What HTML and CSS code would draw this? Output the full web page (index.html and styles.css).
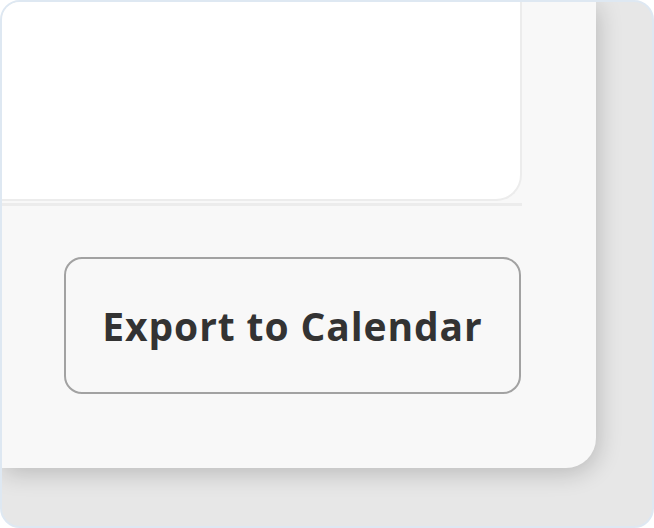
FILE: index.html
```html
<!DOCTYPE html>
<html>
<head>
<meta charset="utf-8">
<link rel="stylesheet" href="styles.css">
</head>
<body>
<div class="frame">
  <div class="card">
    <div class="panel"></div>
    <div class="divider"></div>
    <div class="actions">
      <button class="export-btn">Export to Calendar</button>
    </div>
  </div>
</div>
</body>
</html>
```
FILE: styles.css
```css
html, body {
  margin: 0;
  padding: 0;
  background: #ffffff;
}
.frame {
  box-sizing: border-box;
  width: 654px;
  height: 528px;
  border: 2px solid #dee8f2;
  border-radius: 20px;
  background: #e7e7e7;
  overflow: hidden;
}
.card {
  box-sizing: border-box;
  width: 594px;
  height: 466px;
  background: #f8f8f8;
  border-bottom-right-radius: 30px;
  box-shadow: 2px 5px 24px rgba(0, 0, 0, 0.2);
  display: flex;
  flex-direction: column;
}
.panel {
  box-sizing: border-box;
  width: 520px;
  height: 199px;
  background: #ffffff;
  border-right: 2px solid #ececec;
  border-bottom: 2px solid #ececec;
  border-bottom-right-radius: 26px;
}
.divider {
  width: 520px;
  height: 3px;
  margin-top: 2px;
  background: #ececec;
}
.actions {
  padding: 51px 0 0 62px;
}
.export-btn {
  box-sizing: border-box;
  width: 457px;
  height: 137px;
  border: 2px solid #a2a2a2;
  border-radius: 18px;
  background: #f8f8f8;
  color: #333333;
  font-family: "Open Sans", "Noto Sans", sans-serif;
  font-weight: 700;
  font-size: 39px;
  letter-spacing: 0.9px;
  padding: 0;
  cursor: pointer;
}
```
